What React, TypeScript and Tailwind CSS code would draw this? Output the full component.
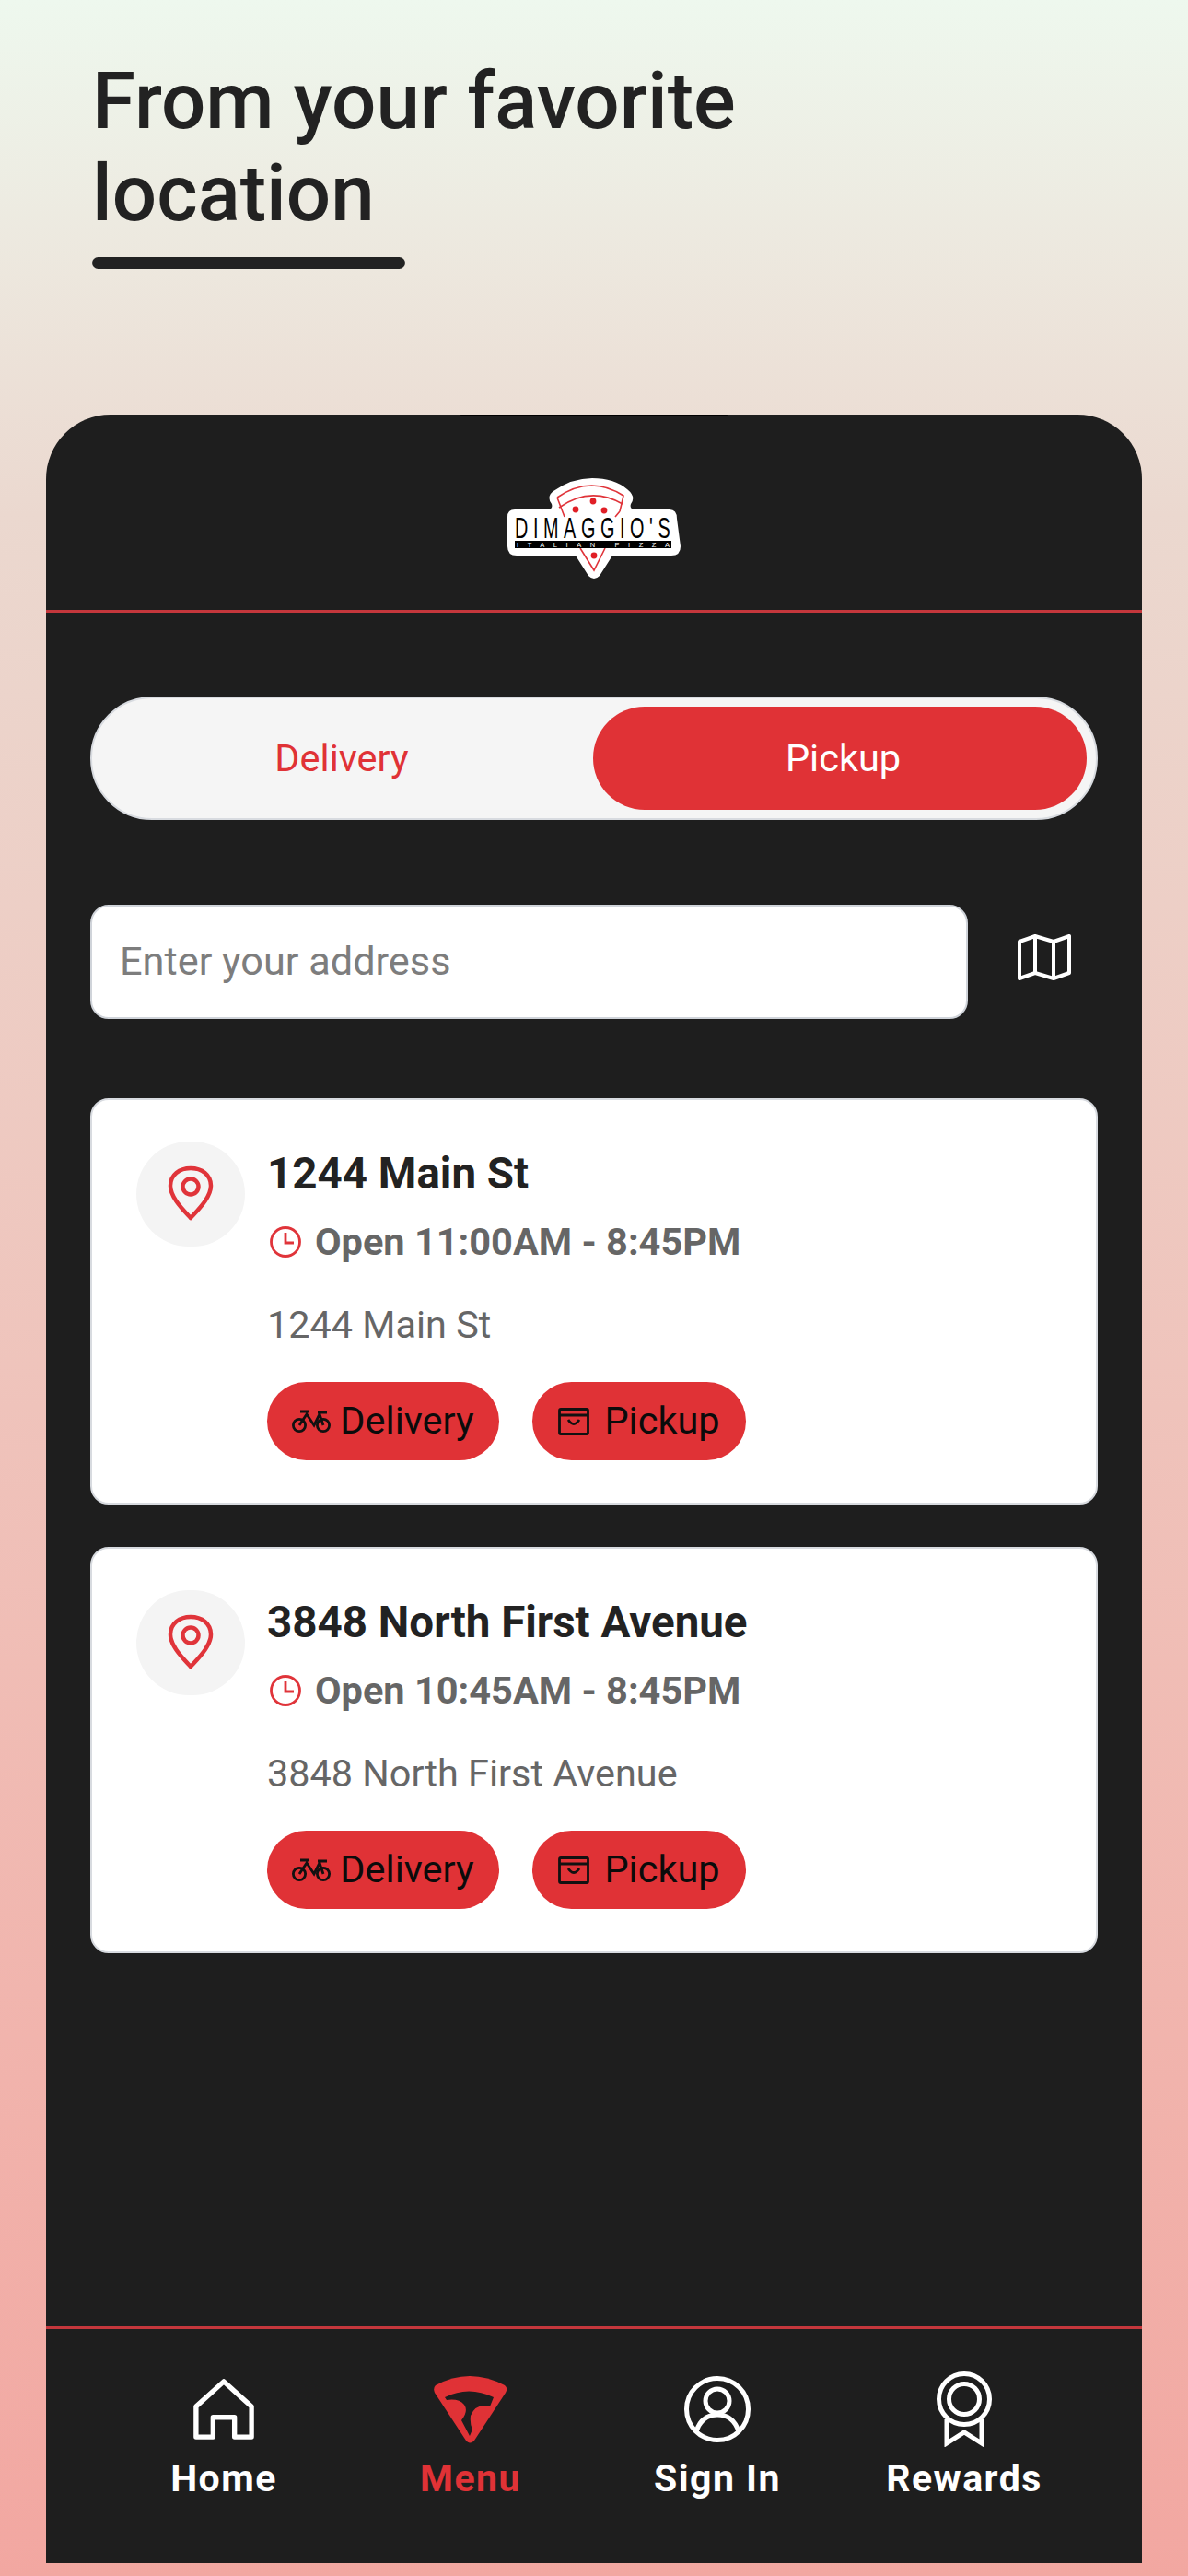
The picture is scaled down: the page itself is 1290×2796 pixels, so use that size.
const font = { fontFamily: "Roboto, sans-serif" };

function Logo() {
  return (
    <svg width="188" height="110" viewBox="0 0 188 110">
      <path d="M8 34 H42 Q50 34 48 28 Q42 20 50 14 Q70 0 92 0 Q116 0 130 12 Q140 20 134 28 Q132 34 140 34 H176 Q184 34 184 44 L188 74 Q188 84 178 84 H114 L100 106 Q94 112 88 106 L74 84 H10 Q0 84 0 74 V42 Q0 34 8 34Z" fill="#fff" />
      <g fill="none" stroke="#e0343a" strokeWidth="1.6">
        <path d="M54 21 Q90 -4 126 19 L122 36" />
        <path d="M56 32 Q90 8 125 28" />
        <path d="M54 21 L62 42 M122 36 L117 42" />
        <path d="M79 76 L94 100 L106 76" />
      </g>
      <circle cx="93" cy="25" r="3.4" fill="#e01f26" />
      <circle cx="74" cy="34" r="3.4" fill="#e01f26" />
      <circle cx="105" cy="35" r="3.4" fill="#e01f26" />
      <circle cx="94" cy="84" r="3.4" fill="#e01f26" />
      <text transform="translate(8 65) scale(0.62 1)" fontFamily="Liberation Sans, sans-serif" fontSize="32" textLength="272" lengthAdjust="spacing" fill="#000">DIMAGGIO'S</text>
      <rect x="8" y="68" width="170" height="8" fill="#000" />
      <text x="10" y="75" fontFamily="Liberation Sans, sans-serif" fontSize="7.5" textLength="166" fill="#fff">ITALIAN PIZZA</text>
    </svg>
  );
}

function Pin() {
  return (
    <svg width="50" height="60" viewBox="0 0 50 60" fill="none" stroke="#e0343a" strokeWidth="4.5" className="-mt-[2px]">
      <path d="M25 57 C15 46 3 34 3 22 C3 10 13 3 25 3 C37 3 47 10 47 22 C47 34 35 46 25 57Z" strokeLinejoin="round" />
      <circle cx="25" cy="23" r="8.5" />
    </svg>
  );
}

function Clock() {
  return (
    <svg width="36" height="36" viewBox="0 0 36 36" fill="none" stroke="#e0343a" strokeWidth="2.8" className="ml-[2px]">
      <circle cx="18" cy="18" r="15.5" />
      <path d="M18 8 V19 H27" />
    </svg>
  );
}

function Bike() {
  return (
    <svg width="42" height="25" viewBox="0 0 42 25" fill="none" stroke="#111" strokeWidth="2.8">
      <circle cx="8" cy="17" r="6.6" />
      <circle cx="34" cy="17" r="6.6" />
      <path d="M8 17 L16 5 L24 17 L30 5 L34 17 M9 2 H19 M28 3 H38" />
    </svg>
  );
}

function Bag() {
  return (
    <svg width="34" height="30" viewBox="0 0 34 30" fill="none" stroke="#111" strokeWidth="2.8">
      <rect x="1.5" y="1.5" width="31" height="27" rx="1.5" />
      <path d="M1.5 8 H32.5 M11 13 Q17 22 23 13" />
    </svg>
  );
}

function Card({ name, hours }: { name: string; hours: string }) {
  return (
    <div className="flex h-[441px] gap-6 rounded-[20px] border-2 border-[#d8dbe0] bg-white pl-[48px] pt-[45px]">
      <div className="flex h-[114px] w-[118px] shrink-0 items-center justify-center rounded-full bg-[#f4f4f4]">
        <Pin />
      </div>
      <div className="mt-[3px] flex flex-col">
        <div className="text-[47.5px] font-bold leading-[64px] text-[#222222]">{name}</div>
        <div className="mt-[10px] flex h-[64px] items-center gap-[14px]">
          <Clock />
          <span className="text-[41.5px] font-bold text-[#666666]">{hours}</span>
        </div>
        <div className="mt-[31px] text-[41.4px] leading-[54px] text-[#666666]">{name}</div>
        <div className="mt-[35px] flex gap-[36px]">
          <div className="flex h-[85px] w-[252px] items-center justify-center gap-[10px] rounded-full bg-[#e03236] text-[41.5px] text-[#0b0b0b]">
            <Bike />
            <span>Delivery</span>
          </div>
          <div className="flex h-[85px] w-[232px] items-center justify-center gap-[16px] rounded-full bg-[#e03236] text-[41.5px] text-[#0b0b0b]">
            <Bag />
            <span>Pickup</span>
          </div>
        </div>
      </div>
    </div>
  );
}

function NavItem({ label, active, children }: { label: string; active?: boolean; children: React.ReactNode }) {
  return (
    <div className="flex w-[268px] flex-col items-center">
      <div className="flex h-[80px] items-center justify-center">{children}</div>
      <div className={`mt-[10px] text-[41px] font-bold leading-[50px] tracking-[1.5px] ${active ? "text-[#e03236]" : "text-white"}`}>{label}</div>
    </div>
  );
}

export default function App() {
  return (
    <div style={font} className="flex h-[2796px] w-[1290px] flex-col bg-gradient-to-b from-[#eef8ee] via-[#ebd8cf] via-[20%] to-[#f2a7a1] pb-[14px]">
      <div className="h-[450px] shrink-0 pl-[100px] pt-[60px]">
        <h1 className="text-[85.3px] font-medium leading-[100px] text-[#222222]">
          From your favorite
          <br />
          location
        </h1>
        <div className="mt-[19px] h-[13px] w-[340px] rounded-full bg-[#222222]" />
      </div>

      <div className="relative mx-[50px] flex flex-1 flex-col rounded-t-[70px] bg-[#1e1e1e]">
        <div className="absolute left-[450px] top-0 h-[2px] w-[290px] rounded-b-full bg-black" />
        <div className="flex h-[215px] shrink-0 items-center justify-center border-b-[3px] border-[#c4373c] pt-[36px]">
          <Logo />
        </div>

        <div className="flex-1 px-[48px] pt-[91px]">
          <div className="flex h-[134px] items-center rounded-full border-2 border-[#d8dbe0] bg-[#f5f5f5] px-[10px]">
            <div className="flex h-[112px] flex-1 items-center justify-center pr-[12px] text-[41.5px] text-[#e03236]">Delivery</div>
            <div className="flex h-[112px] w-[536px] items-center justify-center rounded-full bg-[#e03236] pl-[7px] text-[41.5px] text-white">Pickup</div>
          </div>

          <div className="mt-[92px] flex items-center">
            <div className="flex h-[124px] w-[953px] items-center rounded-[20px] border-2 border-[#d0d4da] bg-white pl-[30px] text-[43.3px] text-[#7d7d7d]">
              Enter your address
            </div>
            <div className="flex flex-1 items-center justify-center pb-[10px] pl-[24px]">
              <svg width="60" height="52" viewBox="0 0 60 52" fill="none" stroke="#fff" strokeWidth="4" strokeLinejoin="round">
                <path d="M3 9 L20 3 L40 9 L57 3 V43 L40 49 L20 43 L3 49Z M20 3 V43 M40 9 V49" />
              </svg>
            </div>
          </div>

          <div className="mt-[86px] flex flex-col gap-[46px]">
            <Card name="1244 Main St" hours="Open 11:00AM - 8:45PM" />
            <Card name="3848 North First Avenue" hours="Open 10:45AM - 8:45PM" />
          </div>
        </div>

        <div className="flex h-[257px] shrink-0 justify-center border-t-[3px] border-[#c4373c] pt-[47px]">
          <NavItem label="Home">
            <svg width="68" height="68" viewBox="0 0 70 70" fill="none" stroke="#fff" strokeWidth="5.5" strokeLinejoin="round">
              <path d="M4 32 L35 4 L66 32 V66 H47 V44 H23 V66 H4Z" />
            </svg>
          </NavItem>
          <NavItem label="Menu" active>
            <svg width="80" height="73" viewBox="0 0 80 73" fill="#e03236">
              <path d="M2 10 Q39 -10 77 10 Q81 13 78 18 L44 70 Q39 75 35 70 L1 18 Q-1 13 2 10Z" />
              <path d="M12 23 Q38 10 65 23 L61 33 Q46 29 40 43 Q39 52 42 58 L39 65 L30 48 Q38 38 33 31 Q27 24 14 26Z" fill="#1e1e1e" />
            </svg>
          </NavItem>
          <NavItem label="Sign In">
            <svg width="74" height="72" viewBox="0 0 74 72" fill="none" stroke="#fff" strokeWidth="5">
              <circle cx="37" cy="36" r="33.5" />
              <circle cx="37" cy="27" r="13" />
              <path d="M14 60 Q20 42 37 42 Q54 42 60 60" />
            </svg>
          </NavItem>
          <NavItem label="Rewards">
            <svg width="62" height="82" viewBox="0 0 62 82" fill="none" stroke="#fff" strokeWidth="5">
              <circle cx="31" cy="30" r="27.5" />
              <circle cx="31" cy="30" r="16.5" />
              <path d="M12 52 V78 L31 66 L50 78 V52" />
            </svg>
          </NavItem>
        </div>
      </div>
    </div>
  );
}
